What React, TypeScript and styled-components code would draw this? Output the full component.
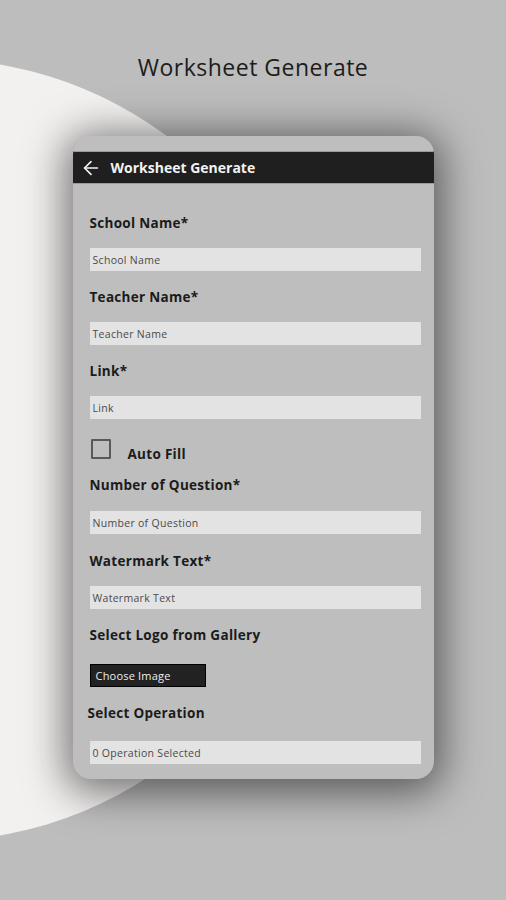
import React from "react";
import styled, { createGlobalStyle } from "styled-components";
import { ArrowLeft } from "lucide-react";

const GlobalStyle = createGlobalStyle`
  html, body {
    margin: 0;
    padding: 0;
    background: #bdbdbd;
  }
  * {
    box-sizing: border-box;
  }
`;

const Page = styled.div`
  position: relative;
  width: 506px;
  height: 900px;
  overflow: hidden;
  background: #bdbdbd;
  display: flex;
  flex-direction: column;
  align-items: center;
  font-family: "Open Sans", "Liberation Sans", sans-serif;
`;

const Blob = styled.div`
  position: absolute;
  left: -457px;
  top: 59px;
  width: 782px;
  height: 782px;
  border-radius: 50%;
  background: #f3f1f0;
`;

const Title = styled.h1`
  position: relative;
  margin: 52px 0 0;
  font-size: 23px;
  line-height: 30px;
  font-weight: 400;
  color: #1c1c1c;
  letter-spacing: 0.5px;
`;

const Card = styled.div`
  position: relative;
  margin-top: 54px;
  width: 361px;
  height: 643px;
  padding-top: 15px;
  border-radius: 18px;
  background: #bebebe;
  box-shadow: 0 6px 40px 8px rgba(0, 0, 0, 0.52);
  overflow: hidden;
`;

const AppBar = styled.div`
  display: flex;
  align-items: center;
  gap: 9px;
  height: 33px;
  padding-left: 7px;
  background: #1f1f1f;
  border-top: 1px solid #9a9a9a;
  border-bottom: 1px solid #9a9a9a;
  color: #f2f2f2;
`;

const AppBarTitle = styled.span`
  font-size: 14px;
  font-weight: 700;
  letter-spacing: 0;
`;

const Form = styled.div`
  display: flex;
  flex-direction: column;
  padding: 30px 13px 0 17px;
`;

const Field = styled.div<{ $gapAfter?: number }>`
  display: flex;
  flex-direction: column;
  margin-bottom: ${(p) => p.$gapAfter ?? 17}px;
`;

const Label = styled.div<{ $shift?: number }>`
  font-size: 13.5px;
  line-height: 18px;
  font-weight: 700;
  color: #1b1b1b;
  letter-spacing: 0.3px;
  margin-left: ${(p) => p.$shift ?? 0}px;
`;

const Input = styled.div<{ $top?: number }>`
  margin-top: ${(p) => p.$top ?? 16}px;
  height: 23px;
  display: flex;
  align-items: center;
  padding-left: 3px;
  background: #e3e3e3;
  font-size: 10.5px;
  letter-spacing: 0.3px;
  color: #4a4a4a;
`;

const CheckRow = styled.div`
  display: flex;
  align-items: flex-end;
  gap: 17px;
  margin: 1px 0 17px 1px;
`;

const Box = styled.div`
  width: 20px;
  height: 20px;
  border: 2px solid #5a5a5a;
  border-radius: 1px;
`;

const CheckText = styled.span`
  font-size: 13.5px;
  font-weight: 700;
  line-height: 16px;
  letter-spacing: 0.3px;
  color: #1b1b1b;
  margin-bottom: -3px;
`;

const ChooseButton = styled.div`
  margin-top: 20px;
  width: 116px;
  height: 23px;
  display: flex;
  align-items: center;
  padding-left: 5px;
  background: #222;
  border: 1px solid #000;
  color: #eee;
  font-size: 11px;
  letter-spacing: 0.2px;
`;

export default function App() {
  return (
    <>
      <GlobalStyle />
      <Page>
        <Blob />
        <Title>Worksheet Generate</Title>
        <Card>
          <AppBar>
            <ArrowLeft size={22} strokeWidth={1.8} />
            <AppBarTitle>Worksheet Generate</AppBarTitle>
          </AppBar>
          <Form>
            <Field>
              <Label>School Name*</Label>
              <Input>School Name</Input>
            </Field>
            <Field>
              <Label>Teacher Name*</Label>
              <Input>Teacher Name</Input>
            </Field>
            <Field $gapAfter={19}>
              <Label>Link*</Label>
              <Input>Link</Input>
            </Field>
            <CheckRow>
              <Box />
              <CheckText>Auto Fill</CheckText>
            </CheckRow>
            <Field $gapAfter={18}>
              <Label>Number of Question*</Label>
              <Input $top={17}>Number of Question</Input>
            </Field>
            <Field $gapAfter={17}>
              <Label>Watermark Text*</Label>
              <Input>Watermark Text</Input>
            </Field>
            <Field $gapAfter={17}>
              <Label>Select Logo from Gallery</Label>
              <ChooseButton>Choose Image</ChooseButton>
            </Field>
            <Field>
              <Label $shift={-2}>Select Operation</Label>
              <Input $top={19}>0 Operation Selected</Input>
            </Field>
          </Form>
        </Card>
      </Page>
    </>
  );
}
